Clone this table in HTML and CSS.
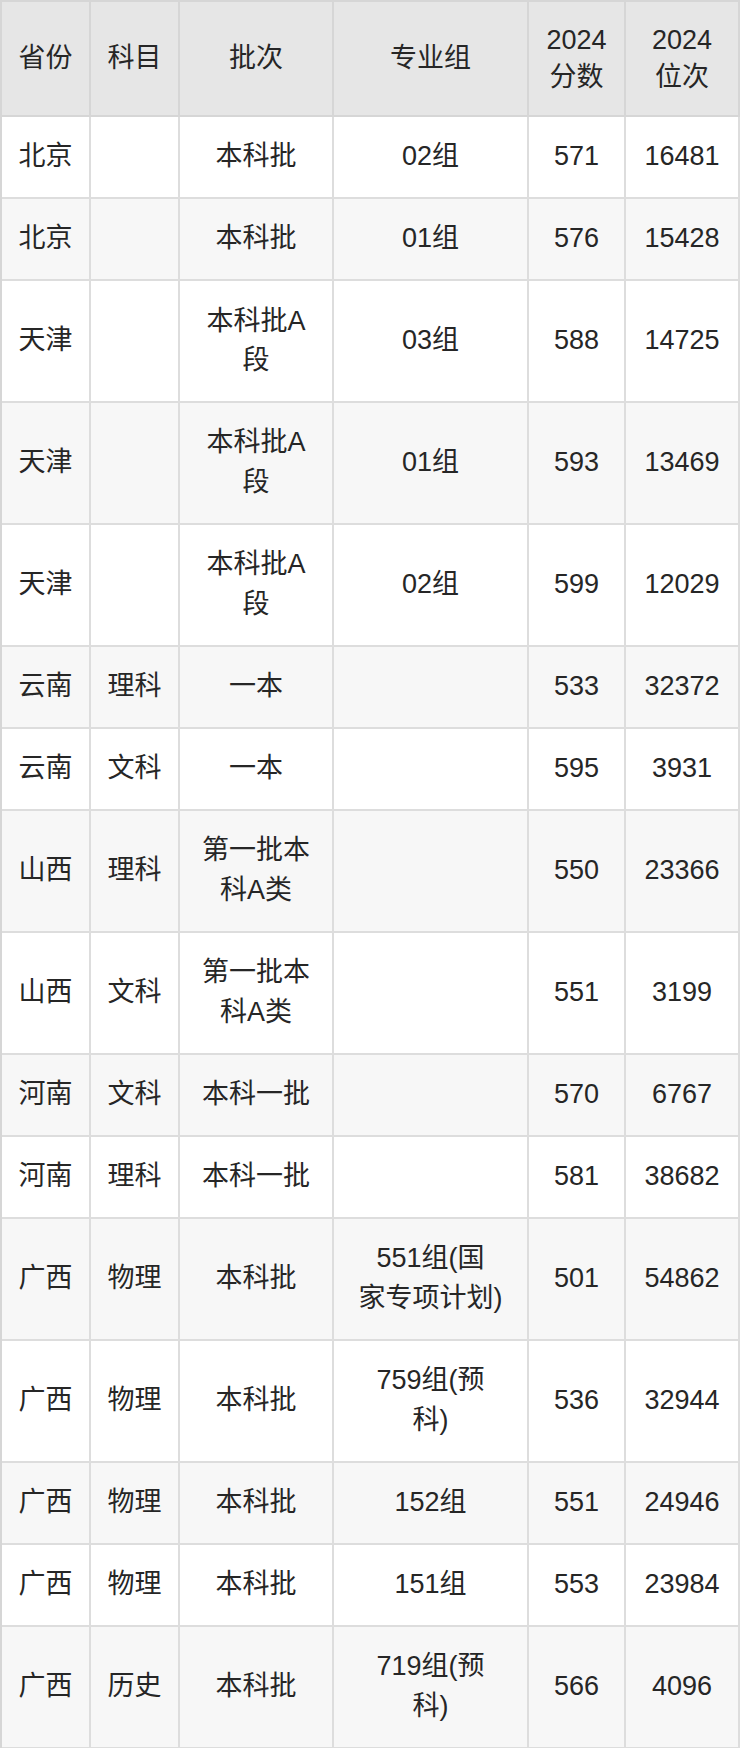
FILE: index.html
```html
<!DOCTYPE html>
<html lang="zh-CN">
<head>
<meta charset="utf-8">
<title>分数线</title>
<link rel="stylesheet" href="styles.css">
</head>
<body>
<table class="score-table">
  <thead>
    <tr>
      <th class="c1">省份</th>
      <th class="c2">科目</th>
      <th class="c3">批次</th>
      <th class="c4">专业组</th>
      <th class="c5">2024<br>分数</th>
      <th class="c6">2024<br>位次</th>
    </tr>
  </thead>
  <tbody>
    <tr><td>北京</td><td></td><td>本科批</td><td>02组</td><td>571</td><td>16481</td></tr>
    <tr><td>北京</td><td></td><td>本科批</td><td>01组</td><td>576</td><td>15428</td></tr>
    <tr><td>天津</td><td></td><td>本科批A<br>段</td><td>03组</td><td>588</td><td>14725</td></tr>
    <tr><td>天津</td><td></td><td>本科批A<br>段</td><td>01组</td><td>593</td><td>13469</td></tr>
    <tr><td>天津</td><td></td><td>本科批A<br>段</td><td>02组</td><td>599</td><td>12029</td></tr>
    <tr><td>云南</td><td>理科</td><td>一本</td><td></td><td>533</td><td>32372</td></tr>
    <tr><td>云南</td><td>文科</td><td>一本</td><td></td><td>595</td><td>3931</td></tr>
    <tr><td>山西</td><td>理科</td><td>第一批本<br>科A类</td><td></td><td>550</td><td>23366</td></tr>
    <tr><td>山西</td><td>文科</td><td>第一批本<br>科A类</td><td></td><td>551</td><td>3199</td></tr>
    <tr><td>河南</td><td>文科</td><td>本科一批</td><td></td><td>570</td><td>6767</td></tr>
    <tr><td>河南</td><td>理科</td><td>本科一批</td><td></td><td>581</td><td>38682</td></tr>
    <tr><td>广西</td><td>物理</td><td>本科批</td><td>551组(国<br>家专项计划)</td><td>501</td><td>54862</td></tr>
    <tr><td>广西</td><td>物理</td><td>本科批</td><td>759组(预<br>科)</td><td>536</td><td>32944</td></tr>
    <tr><td>广西</td><td>物理</td><td>本科批</td><td>152组</td><td>551</td><td>24946</td></tr>
    <tr><td>广西</td><td>物理</td><td>本科批</td><td>151组</td><td>553</td><td>23984</td></tr>
    <tr><td>广西</td><td>历史</td><td>本科批</td><td>719组(预<br>科)</td><td>566</td><td>4096</td></tr>
  </tbody>
</table>
</body>
</html>
```

FILE: styles.css
```css
html, body {
  margin: 0;
  padding: 0;
  background: #ffffff;
}

.score-table {
  width: 740px;
  table-layout: fixed;
  border-collapse: separate;
  border-spacing: 0;
  border-top: 2px solid #d6d6d6;
  border-left: 2px solid #d6d6d6;
  font-family: "Liberation Sans", "Noto Sans CJK SC", sans-serif;
  font-size: 27px;
  color: #262626;
}

.score-table th,
.score-table td {
  box-sizing: border-box;
  text-align: center;
  vertical-align: middle;
  white-space: nowrap;
  border-right: 2px solid #dddddd;
  border-bottom: 2px solid #dddddd;
  padding: 20.3px 6px;
  line-height: 39.6px;
}

.score-table th {
  font-weight: normal;
  background: #e6e6e6;
  border-color: #d6d6d6;
  padding: 20.25px 6px;
  line-height: 36.25px;
}

.score-table .c1 { width: 89px; }
.score-table .c2 { width: 89px; }
.score-table .c3 { width: 154px; }
.score-table .c4 { width: 195px; }
.score-table .c5 { width: 97px; }
.score-table .c6 { width: 114px; }

.score-table tbody tr:nth-child(even) td {
  background: #f7f7f7;
}
```
